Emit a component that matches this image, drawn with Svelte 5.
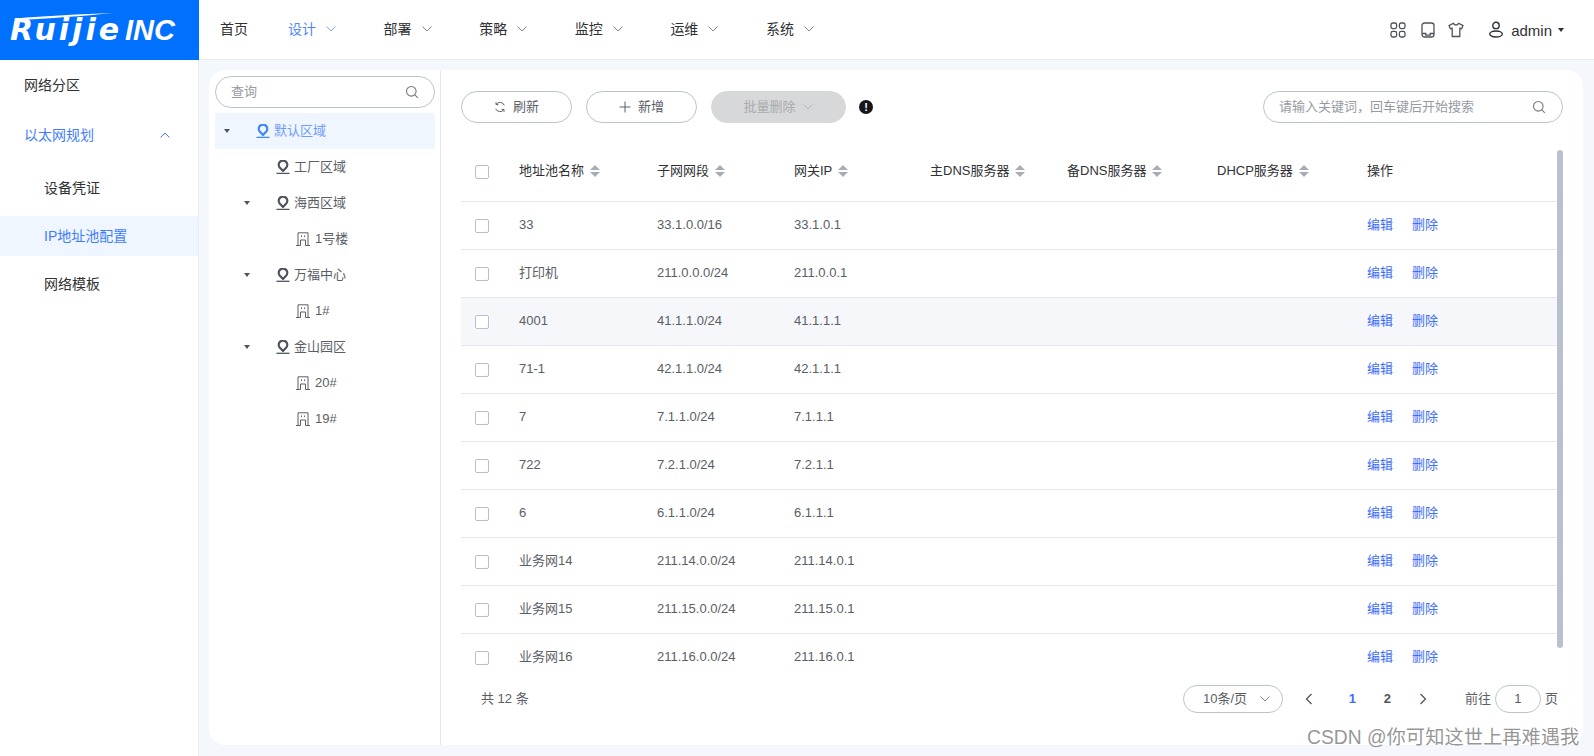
<script>
  const navItems = [
    { label: '首页' },
    { label: '设计', active: true, arrow: true },
    { label: '部署', arrow: true },
    { label: '策略', arrow: true },
    { label: '监控', arrow: true },
    { label: '运维', arrow: true },
    { label: '系统', arrow: true }
  ];

  const tree = [
    { label: '默认区域', level: 0, type: 'pin', caret: true, selected: true },
    { label: '工厂区域', level: 1, type: 'pin' },
    { label: '海西区域', level: 1, type: 'pin', caret: true },
    { label: '1号楼', level: 2, type: 'building' },
    { label: '万福中心', level: 1, type: 'pin', caret: true },
    { label: '1#', level: 2, type: 'building' },
    { label: '金山园区', level: 1, type: 'pin', caret: true },
    { label: '20#', level: 2, type: 'building' },
    { label: '19#', level: 2, type: 'building' }
  ];

  const columns = ['地址池名称', '子网网段', '网关IP', '主DNS服务器', '备DNS服务器', 'DHCP服务器'];

  const rows = [
    { name: '33', subnet: '33.1.0.0/16', gateway: '33.1.0.1' },
    { name: '打印机', subnet: '211.0.0.0/24', gateway: '211.0.0.1' },
    { name: '4001', subnet: '41.1.1.0/24', gateway: '41.1.1.1', hover: true },
    { name: '71-1', subnet: '42.1.1.0/24', gateway: '42.1.1.1' },
    { name: '7', subnet: '7.1.1.0/24', gateway: '7.1.1.1' },
    { name: '722', subnet: '7.2.1.0/24', gateway: '7.2.1.1' },
    { name: '6', subnet: '6.1.1.0/24', gateway: '6.1.1.1' },
    { name: '业务网14', subnet: '211.14.0.0/24', gateway: '211.14.0.1' },
    { name: '业务网15', subnet: '211.15.0.0/24', gateway: '211.15.0.1' },
    { name: '业务网16', subnet: '211.16.0.0/24', gateway: '211.16.0.1' }
  ];
</script>

{#snippet chevron(cls)}
  <svg class={cls} viewBox="0 0 12 8" width="12" height="8" fill="none" stroke="currentColor" stroke-width="1"><path d="M1.5 1.5 6 6l4.5-4.5" /></svg>
{/snippet}

{#snippet searchIcon()}
  <svg class="search-icon" viewBox="0 0 14 14" width="14" height="14" fill="none" stroke="#717782" stroke-width="1.1"><circle cx="6.3" cy="6.3" r="4.8" /><path d="m9.8 9.8 3 3" /></svg>
{/snippet}

<div class="page">
  <header class="topbar">
    <div class="logo">
      <span class="logo-text"><span class="brand">Ruijie</span><span class="inc">INC</span></span>
      <svg class="swoosh" viewBox="0 0 98 7" width="98" height="7"><path d="M0 5.5C30 3 66 1 98 0 68 3 34 5.5 3 7Z" fill="#fff" /></svg>
    </div>
    <nav class="nav">
      {#each navItems as item}
        <div class="nav-item" class:home={!item.arrow} class:active={item.active}>
          <span>{item.label}</span>
          {#if item.arrow}{@render chevron('nav-arrow')}{/if}
        </div>
      {/each}
    </nav>
    <div class="top-right">
      <svg viewBox="0 0 16 16" width="16" height="16" fill="none" stroke="#4d525c" stroke-width="1.3"><rect x="1" y="1" width="5.6" height="5.6" rx="1.8" /><rect x="9.4" y="1" width="5.6" height="5.6" rx="1.8" /><rect x="1" y="9.4" width="5.6" height="5.6" rx="1.8" /><rect x="9.4" y="9.4" width="5.6" height="5.6" rx="1.8" /></svg>
      <svg class="tablet" viewBox="0 0 14 16" width="14" height="16" fill="none" stroke="#4d525c" stroke-width="1.3"><rect x="1" y="1" width="12" height="14" rx="2.5" /><path d="M1 11.5h3.8v1.6h4.4v-1.6H13" /></svg>
      <svg class="shirt" viewBox="0 0 16 16" width="16" height="16" fill="none" stroke="#4d525c" stroke-width="1.3" stroke-linejoin="round"><path d="M5.4 1.2 1 3.6l1.4 3.2 1.8-.7v8.4h7.6V6.1l1.8.7L15 3.6l-4.4-2.4C10 3.6 6 3.6 5.4 1.2Z" /></svg>
      <svg class="user" viewBox="0 0 16 17" width="16" height="17" fill="none" stroke="#2c2f36" stroke-width="1.4"><circle cx="8" cy="4.4" r="3.2" /><ellipse cx="8" cy="13" rx="6.3" ry="3" /></svg>
      <span class="admin">admin</span>
      <span class="caret admin-caret"></span>
    </div>
  </header>

  <div class="body">
    <aside class="sidebar">
      <div class="menu-item first">网络分区</div>
      <div class="menu-item open">
        <span>以太网规划</span>
        <svg viewBox="0 0 12 8" width="12" height="8" fill="none" stroke="currentColor" stroke-width="1"><path d="M1.5 6.5 6 2l4.5 4.5" /></svg>
      </div>
      <div class="menu-item sub">设备凭证</div>
      <div class="menu-item sub selected">IP地址池配置</div>
      <div class="menu-item sub">网络模板</div>
    </aside>

    <section class="card">
      <div class="tree-panel">
        <div class="tree-search">
          <span>查询</span>
          {@render searchIcon()}
        </div>
        <div class="tree">
          {#each tree as node}
            <div class="tree-row" class:selected={node.selected} style="padding-left: {node.level * 20}px">
              <span class="caret-box">{#if node.caret}<span class="caret"></span>{/if}</span>
              {#if node.type === 'pin'}
                <svg class="node-icon pin" viewBox="0 0 14 14" width="14" height="14" fill="none" stroke="currentColor" stroke-width="2.2"><path d="M7 11 4.2 8.1A4.3 4.3 0 1 1 9.8 8.1Z" stroke-linejoin="round" /><path d="M.5 13.3h13" stroke-width="1.3" /></svg>
              {:else}
                <svg class="node-icon" viewBox="0 0 14 14" width="14" height="14" fill="none" stroke="currentColor" stroke-width="1"><path d="M2 13.5V.8h10v12.7M0 13.5h4.5V8h5v5.5H14" /><path d="M5 3.5h1v1.5H5zM8 3.5h1v1.5H8z" fill="currentColor" stroke="none" /></svg>
              {/if}
              <span class="node-label">{node.label}</span>
            </div>
          {/each}
        </div>
      </div>

      <div class="main">
        <div class="toolbar">
          <button class="btn">
            <svg viewBox="0 0 12 12" width="12" height="12" fill="none" stroke="#5c616b" stroke-width="1"><path d="M10.3 4.3A4.6 4.6 0 0 0 2.2 3.4M1.7 7.7a4.6 4.6 0 0 0 8.1.9" /><path d="M2 1.2v2.4h2.4M10 10.8V8.4H7.6" /></svg>
            刷新
          </button>
          <button class="btn">
            <svg viewBox="0 0 12 12" width="12" height="12" fill="none" stroke="#5c616b" stroke-width="1"><path d="M6 .5v11M.5 6h11" /></svg>
            新增
          </button>
          <button class="btn batch">批量删除 {@render chevron('batch-arrow')}</button>
          <span class="warn">!</span>
          <div class="table-search">
            <span>请输入关键词，回车键后开始搜索</span>
            {@render searchIcon()}
          </div>
        </div>

        <div class="table-wrap">
          <table>
            <colgroup>
              <col style="width: 44px" />
              <col style="width: 138px" />
              <col style="width: 137px" />
              <col style="width: 136px" />
              <col style="width: 137px" />
              <col style="width: 150px" />
              <col style="width: 150px" />
              <col />
            </colgroup>
            <thead>
              <tr>
                <th><span class="check"></span></th>
                {#each columns as col}
                  <th>
                    <span class="th-inner">{col}<span class="sort"><i class="up"></i><i class="down"></i></span></span>
                  </th>
                {/each}
                <th>操作</th>
              </tr>
            </thead>
            <tbody>
              {#each rows as row}
                <tr class:hover={row.hover}>
                  <td><span class="check"></span></td>
                  <td>{row.name}</td>
                  <td>{row.subnet}</td>
                  <td>{row.gateway}</td>
                  <td></td>
                  <td></td>
                  <td></td>
                  <td><a href="#edit" class="link">编辑</a><a href="#del" class="link">删除</a></td>
                </tr>
              {/each}
            </tbody>
          </table>
          <div class="scrollbar"></div>
        </div>

        <div class="pager">
          <span class="total">共 12 条</span>
          <div class="size-select"><span>10条/页</span>{@render chevron('size-arrow')}</div>
          <svg class="page-arrow prev" viewBox="0 0 8 12" width="8" height="12" fill="none" stroke="#50555f" stroke-width="1.3"><path d="M6.5 1 1.5 6l5 5" /></svg>
          <span class="page-no current">1</span>
          <span class="page-no">2</span>
          <svg class="page-arrow next" viewBox="0 0 8 12" width="8" height="12" fill="none" stroke="#50555f" stroke-width="1.3"><path d="M1.5 1l5 5-5 5" /></svg>
          <span class="goto">前往</span>
          <div class="page-input">1</div>
          <span>页</span>
        </div>
      </div>
    </section>
  </div>

  <div class="watermark">CSDN @你可知这世上再难遇我</div>
</div>

<style>
  :global(body) {
    margin: 0;
    background: #f4f7fb;
    font-family: "Liberation Sans", "Noto Sans CJK SC", sans-serif;
    overflow: hidden;
  }

  .page {
    position: relative;
    height: 756px;
    width: 1594px;
    overflow: hidden;
    display: flex;
    flex-direction: column;
    font-size: 13px;
    line-height: 1.2;
    color: #5a5e66;
  }

  .topbar {
    height: 60px;
    flex: none;
    display: flex;
    align-items: center;
    background: #fff;
    border-bottom: 1px solid #e9ecf1;
    box-sizing: border-box;
  }

  .logo {
    position: relative;
    width: 199px;
    height: 60px;
    flex: none;
    background: #0070ff;
    color: #fff;
    display: flex;
    align-items: center;
    padding-left: 10px;
    box-sizing: border-box;
  }

  .logo-text {
    font-style: italic;
    font-weight: 700;
    white-space: nowrap;
    line-height: 1;
  }

  .brand {
    font-family: "DejaVu Sans", sans-serif;
    font-size: 30px;
    letter-spacing: 3px;
  }

  .inc {
    font-size: 29px;
    margin-left: 3px;
  }

  .swoosh {
    position: absolute;
    left: 15px;
    top: 13px;
  }

  .nav {
    display: flex;
    margin-left: 21px;
    font-size: 14px;
    color: #303133;
  }

  .nav-item {
    width: 95.6px;
    display: flex;
    align-items: center;
    gap: 9px;
  }

  .nav-item.home {
    width: 68px;
  }

  .nav-item.active {
    color: #4f86ff;
  }

  .nav-arrow {
    color: #7f858f;
  }

  .active .nav-arrow {
    color: #7ea4ff;
  }

  .top-right {
    margin-left: auto;
    display: flex;
    align-items: center;
    padding-right: 30px;
    color: #303133;
    font-size: 15px;
  }

  .tablet {
    margin-left: 15px;
  }

  .shirt {
    margin-left: 13px;
  }

  .user {
    margin-left: 24px;
  }

  .admin {
    margin-left: 7px;
    padding-top: 2px;
  }

  .caret {
    display: inline-block;
    width: 0;
    height: 0;
    border-left: 3.5px solid transparent;
    border-right: 3.5px solid transparent;
    border-top: 4px solid #50555f;
  }

  .admin-caret {
    margin-left: 6px;
    border-top-color: #303133;
  }

  .body {
    flex: 1;
    display: flex;
    min-height: 0;
  }

  .sidebar {
    width: 199px;
    flex: none;
    background: #fff;
    border-right: 1px solid #e9ecf1;
    box-sizing: border-box;
    font-size: 14px;
    color: #303133;
  }

  .menu-item {
    height: 40px;
    display: flex;
    align-items: center;
    padding-left: 24px;
    margin-bottom: 8px;
  }

  .menu-item.first {
    margin-top: 5px;
    margin-bottom: 10px;
  }

  .menu-item.open {
    color: #3f7cff;
    justify-content: space-between;
    padding-right: 27px;
    margin-bottom: 13px;
  }

  .menu-item.sub {
    padding-left: 44px;
  }

  .menu-item.selected {
    background: #eff6ff;
    color: #3f7cff;
  }

  .card {
    flex: none;
    width: 1374px;
    height: 675px;
    margin: 10px 0 0 10px;
    background: #fff;
    border-radius: 16px;
    display: flex;
    overflow: hidden;
  }

  .tree-panel {
    width: 232px;
    flex: none;
    box-sizing: border-box;
    border-right: 1px solid #e4e7ec;
    padding: 6px 5px 0 6px;
  }

  .tree-search {
    height: 32px;
    box-sizing: border-box;
    border: 1px solid #bcc3d0;
    border-radius: 16px;
    display: flex;
    align-items: center;
    justify-content: space-between;
    padding: 0 15px;
    color: #969ba3;
    margin-bottom: 5px;
  }

  .search-icon {
    flex: none;
  }

  .tree-row {
    height: 36px;
    display: flex;
    align-items: center;
    color: #5a5e66;
  }

  .tree-row.selected {
    background: #eff6ff;
    color: #6f9bff;
  }

  .tree-row .pin {
    color: #4f545e;
  }

  .tree-row.selected .node-icon {
    color: #3f86ff;
  }

  .caret-box {
    width: 24px;
    flex: none;
    display: flex;
    justify-content: center;
    margin-right: 17px;
  }

  .node-icon {
    flex: none;
    margin-right: 5px;
  }

  .node-icon.pin {
    margin-right: 4px;
  }

  .main {
    flex: 1;
    min-width: 0;
    padding: 21px 20px 0;
    display: flex;
    flex-direction: column;
  }

  .toolbar {
    height: 32px;
    flex: none;
    display: flex;
    align-items: center;
  }

  .btn {
    width: 111px;
    height: 32px;
    box-sizing: border-box;
    background: #fff;
    border: 1px solid #bcc3d0;
    border-radius: 16px;
    font: inherit;
    color: #5a5e66;
    display: flex;
    align-items: center;
    justify-content: center;
    gap: 7px;
    margin-right: 14px;
    padding: 0;
  }

  .btn.batch {
    width: 135px;
    background: #d6d8da;
    border-color: #d6d8da;
    color: #a9abad;
    gap: 6px;
    margin-right: 13px;
  }

  .batch-arrow {
    color: #b5b7b9;
  }

  .warn {
    width: 14px;
    height: 14px;
    border-radius: 50%;
    background: #14161c;
    color: #fff;
    font-size: 11px;
    font-weight: 700;
    line-height: 14px;
    text-align: center;
  }

  .table-search {
    margin-left: auto;
    width: 300px;
    height: 32px;
    box-sizing: border-box;
    border: 1px solid #bcc3d0;
    border-radius: 16px;
    display: flex;
    align-items: center;
    justify-content: space-between;
    padding: 0 16px 0 15px;
    color: #969ba3;
  }

  .table-wrap {
    position: relative;
    height: 532px;
    flex: none;
    margin-top: 17px;
    overflow: hidden;
  }

  table {
    width: 100%;
    table-layout: fixed;
    border-collapse: collapse;
  }

  th,
  td {
    padding: 0 0 0 14px;
    text-align: left;
    border-bottom: 1px solid #e4e7ec;
    box-sizing: border-box;
    font-weight: 400;
  }

  th {
    height: 61px;
    padding-top: 2px;
    color: #303133;
  }

  td {
    height: 48px;
    color: #5a5e66;
  }

  tr.hover td {
    background: #f5f7fb;
  }

  .check {
    display: block;
    width: 14px;
    height: 14px;
    margin-top: 2px;
    box-sizing: border-box;
    border: 1px solid #b9c0cc;
    border-radius: 2px;
    background: #fff;
  }

  .th-inner {
    display: inline-flex;
    align-items: center;
    gap: 6px;
  }

  .sort {
    display: inline-flex;
    flex-direction: column;
    gap: 2px;
  }

  .sort i {
    display: block;
    width: 0;
    height: 0;
    border-left: 5px solid transparent;
    border-right: 5px solid transparent;
  }

  .sort .up {
    border-bottom: 5px solid #a8adb5;
  }

  .sort .down {
    border-top: 5px solid #a8adb5;
  }

  .link {
    color: #3d6cff;
    text-decoration: none;
    margin-right: 19px;
  }

  .scrollbar {
    position: absolute;
    right: 0;
    top: 10px;
    width: 6px;
    height: 498px;
    border-radius: 3px;
    background: #b9c1cf;
  }

  .pager {
    display: flex;
    align-items: center;
    height: 28px;
    flex: none;
    margin-top: 13px;
    padding-right: 5px;
  }

  .total {
    margin-left: 20px;
    margin-right: auto;
  }

  .size-select {
    width: 100px;
    height: 28px;
    box-sizing: border-box;
    border: 1px solid #bcc3d0;
    border-radius: 14px;
    display: flex;
    align-items: center;
    padding-left: 19px;
  }

  .size-arrow {
    margin-left: auto;
    margin-right: 11px;
    color: #7f858f;
  }

  .page-arrow.prev {
    margin-left: 22px;
  }

  .page-no {
    font-weight: 700;
    width: 35px;
    text-align: center;
    color: #50555f;
  }

  .page-no.current {
    margin-left: 22px;
    color: #3d6cff;
  }

  .page-arrow.next {
    margin-left: 14px;
  }

  .goto {
    margin-left: 38px;
    margin-right: 4px;
  }

  .page-input {
    width: 46px;
    height: 28px;
    box-sizing: border-box;
    border: 1px solid #bcc3d0;
    border-radius: 14px;
    text-align: center;
    line-height: 26px;
    margin-right: 4px;
  }

  .watermark {
    position: absolute;
    left: 1307px;
    top: 726px;
    font-size: 19.3px;
    line-height: 24px;
    color: rgba(115, 115, 115, 0.75);
    white-space: nowrap;
    text-shadow: 0 0 2px #fff;
  }
</style>
